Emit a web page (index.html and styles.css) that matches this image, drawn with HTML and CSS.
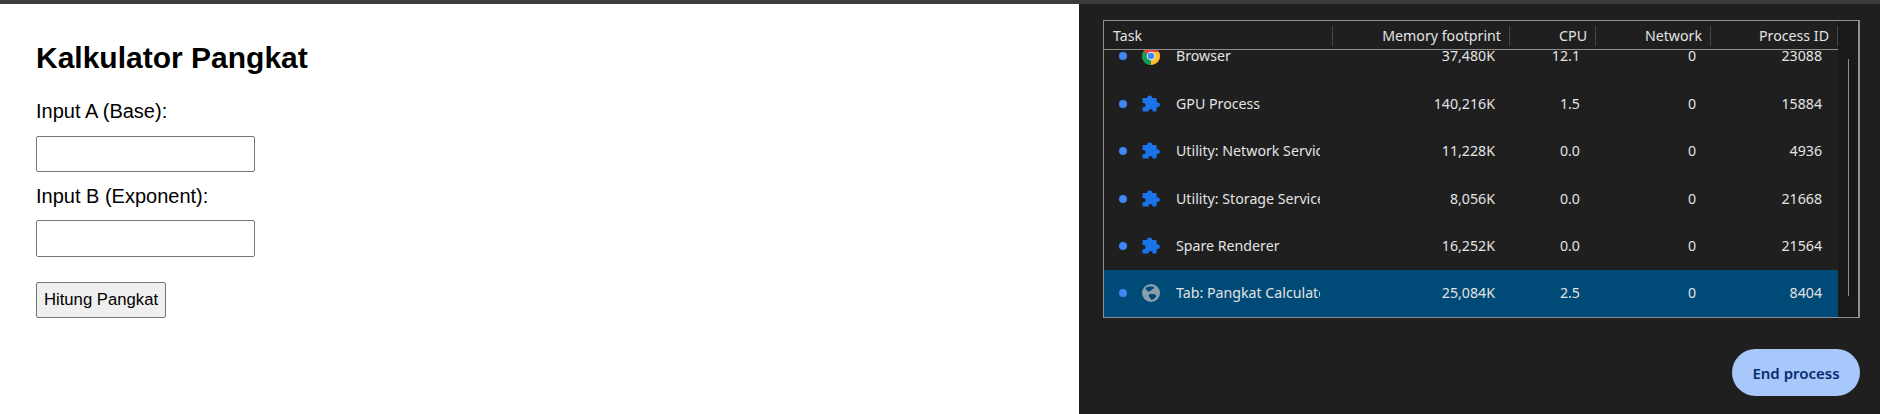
FILE: index.html
```html
<!doctype html>
<html lang="en">
<head>
    <meta charset="UTF-8">
    <title>Kalkulator Pangkat</title>
    <link rel="stylesheet" href="styles.css">
</head>
<body>
    <div class="topbar"></div>
    <div class="screen">
        <div class="page">
            <h1 class="title">Kalkulator Pangkat</h1>
            <label class="field-label">Input A (Base):</label>
            <input class="field" type="text">
            <label class="field-label field-label-b">Input B (Exponent):</label>
            <input class="field field-b" type="text">
            <button class="calc-btn">Hitung Pangkat</button>
        </div>
        <div class="manager">
            <div class="table">
                <div class="table-main">
                    <div class="row head">
                        <div class="head-cell head-task">Task</div>
                        <div class="head-cell">Memory footprint</div>
                        <div class="head-cell">CPU</div>
                        <div class="head-cell">Network</div>
                        <div class="head-cell">Process ID</div>
                    </div>
                    <div class="rows">
                        <div class="row item">
                            <div class="task">
                                <span class="dot"></span>
                                <svg class="icon" viewBox="0 0 18 18">
                                    <circle cx="9" cy="9" r="9" fill="#db4437"/>
                                    <path d="M9 9 L1.2 4.5 A9 9 0 0 0 9 18 Z" fill="#0f9d58"/>
                                    <path d="M9 5 H17 A9 9 0 0 1 9 18 Z" fill="#fbc02d"/>
                                    <circle cx="9" cy="9" r="4.3" fill="#f1f3f4"/>
                                    <circle cx="9" cy="9" r="3.3" fill="#4285f4"/>
                                </svg>
                                <span class="task-name">Browser</span>
                            </div>
                            <div class="num mem">37,480K</div>
                            <div class="num cpu">12.1</div>
                            <div class="num net">0</div>
                            <div class="num pid">23088</div>
                        </div>
                        <div class="row item">
                            <div class="task">
                                <span class="dot"></span>
                                <svg class="icon" viewBox="0 0 18 18"><path class="puzzle" d="M7.2 .6 C9 .1 10.4 1.4 10.1 3.1 L13.6 3.1 C14.2 3.1 14.6 3.5 14.6 4.1 L14.6 7.3 C16.4 6.9 17.9 8.2 17.9 9.8 C17.9 11.4 16.4 12.7 14.6 12.3 L14.6 15.6 C14.6 16.2 14.2 16.6 13.6 16.6 L10.6 16.6 C10.9 14.9 9.9 13.9 8.6 13.9 C7.3 13.9 6.3 14.9 6.6 16.6 L1.5 16.6 C.9 16.6 .5 16.2 .5 15.6 L.5 12.2 C2.3 12.6 3.6 11.5 3.6 10.2 C3.6 8.9 2.3 7.8 .5 8.2 L.5 4.1 C.5 3.5 .9 3.1 1.5 3.1 L5.2 3.1 C4.9 2 5.6 1 7.2 .6 Z"/></svg>
                                <span class="task-name">GPU Process</span>
                            </div>
                            <div class="num mem">140,216K</div>
                            <div class="num cpu">1.5</div>
                            <div class="num net">0</div>
                            <div class="num pid">15884</div>
                        </div>
                        <div class="row item">
                            <div class="task">
                                <span class="dot"></span>
                                <svg class="icon" viewBox="0 0 18 18"><path class="puzzle" d="M7.2 .6 C9 .1 10.4 1.4 10.1 3.1 L13.6 3.1 C14.2 3.1 14.6 3.5 14.6 4.1 L14.6 7.3 C16.4 6.9 17.9 8.2 17.9 9.8 C17.9 11.4 16.4 12.7 14.6 12.3 L14.6 15.6 C14.6 16.2 14.2 16.6 13.6 16.6 L10.6 16.6 C10.9 14.9 9.9 13.9 8.6 13.9 C7.3 13.9 6.3 14.9 6.6 16.6 L1.5 16.6 C.9 16.6 .5 16.2 .5 15.6 L.5 12.2 C2.3 12.6 3.6 11.5 3.6 10.2 C3.6 8.9 2.3 7.8 .5 8.2 L.5 4.1 C.5 3.5 .9 3.1 1.5 3.1 L5.2 3.1 C4.9 2 5.6 1 7.2 .6 Z"/></svg>
                                <span class="task-name">Utility: Network Service</span>
                            </div>
                            <div class="num mem">11,228K</div>
                            <div class="num cpu">0.0</div>
                            <div class="num net">0</div>
                            <div class="num pid">4936</div>
                        </div>
                        <div class="row item">
                            <div class="task">
                                <span class="dot"></span>
                                <svg class="icon" viewBox="0 0 18 18"><path class="puzzle" d="M7.2 .6 C9 .1 10.4 1.4 10.1 3.1 L13.6 3.1 C14.2 3.1 14.6 3.5 14.6 4.1 L14.6 7.3 C16.4 6.9 17.9 8.2 17.9 9.8 C17.9 11.4 16.4 12.7 14.6 12.3 L14.6 15.6 C14.6 16.2 14.2 16.6 13.6 16.6 L10.6 16.6 C10.9 14.9 9.9 13.9 8.6 13.9 C7.3 13.9 6.3 14.9 6.6 16.6 L1.5 16.6 C.9 16.6 .5 16.2 .5 15.6 L.5 12.2 C2.3 12.6 3.6 11.5 3.6 10.2 C3.6 8.9 2.3 7.8 .5 8.2 L.5 4.1 C.5 3.5 .9 3.1 1.5 3.1 L5.2 3.1 C4.9 2 5.6 1 7.2 .6 Z"/></svg>
                                <span class="task-name">Utility: Storage Service</span>
                            </div>
                            <div class="num mem">8,056K</div>
                            <div class="num cpu">0.0</div>
                            <div class="num net">0</div>
                            <div class="num pid">21668</div>
                        </div>
                        <div class="row item">
                            <div class="task">
                                <span class="dot"></span>
                                <svg class="icon" viewBox="0 0 18 18"><path class="puzzle" d="M7.2 .6 C9 .1 10.4 1.4 10.1 3.1 L13.6 3.1 C14.2 3.1 14.6 3.5 14.6 4.1 L14.6 7.3 C16.4 6.9 17.9 8.2 17.9 9.8 C17.9 11.4 16.4 12.7 14.6 12.3 L14.6 15.6 C14.6 16.2 14.2 16.6 13.6 16.6 L10.6 16.6 C10.9 14.9 9.9 13.9 8.6 13.9 C7.3 13.9 6.3 14.9 6.6 16.6 L1.5 16.6 C.9 16.6 .5 16.2 .5 15.6 L.5 12.2 C2.3 12.6 3.6 11.5 3.6 10.2 C3.6 8.9 2.3 7.8 .5 8.2 L.5 4.1 C.5 3.5 .9 3.1 1.5 3.1 L5.2 3.1 C4.9 2 5.6 1 7.2 .6 Z"/></svg>
                                <span class="task-name">Spare Renderer</span>
                            </div>
                            <div class="num mem">16,252K</div>
                            <div class="num cpu">0.0</div>
                            <div class="num net">0</div>
                            <div class="num pid">21564</div>
                        </div>
                        <div class="row item selected">
                            <div class="task">
                                <span class="dot"></span>
                                <svg class="icon" viewBox="0 0 18 18">
                                    <circle cx="9" cy="9" r="9" fill="#8a9eac"/>
                                    <path d="M3.5 4 C6 2.2 10 2 12.5 3.2 C12 5 9.5 5 8.5 7 C6.5 8.5 4.5 7 3.5 4 Z" fill="#004a77"/>
                                    <path d="M7 10.5 C10 9 13 10 14.5 12 C13.5 14 11.5 15.6 9.2 16 C9.2 14 6 13.5 7 10.5 Z" fill="#004a77"/>
                                </svg>
                                <span class="task-name">Tab: Pangkat Calculator</span>
                            </div>
                            <div class="num mem">25,084K</div>
                            <div class="num cpu">2.5</div>
                            <div class="num net">0</div>
                            <div class="num pid">8404</div>
                        </div>
                    </div>
                </div>
                <div class="scroll-gutter"><div class="scroll-thumb"></div></div>
            </div>
            <div class="actions">
                <button class="end-btn">End process</button>
            </div>
        </div>
    </div>
</body>
</html>
```
FILE: styles.css
```css
*{
    margin:0;
    padding:0;
    box-sizing: border-box;
}
html,body{
    width: 1880px;
    height: 414px;
    overflow: hidden;
}
.topbar{
    height: 4px;
    background: #3c3c3c;
}
.screen{
    display: flex;
    height: 410px;
}
.page{
    width: 1079px;
    background: #ffffff;
    color: #000000;
    font-family: "Liberation Sans", Arial, sans-serif;
    padding: 37px 36px 0;
    display: flex;
    flex-direction: column;
    align-items: flex-start;
}
.title{
    font-size: 30px;
    line-height: 33px;
    margin-bottom: 26px;
}
.field-label{
    font-size: 20px;
    line-height: 22px;
    margin-bottom: 14px;
}
.field-label-b{
    margin-bottom: 13px;
}
.field{
    width: 219px;
    height: 36px;
    border: 1px solid #767676;
    border-radius: 2px;
    background: #ffffff;
    margin-bottom: 13px;
}
.field-b{
    height: 37px;
}
.calc-btn{
    width: 130px;
    height: 36px;
    margin-top: 12px;
    font-family: "Liberation Sans", Arial, sans-serif;
    font-size: 16.7px;
    color: #000000;
    background: #efefef;
    border: 1px solid #767676;
    border-radius: 2px;
}
.manager{
    flex: 1;
    background: #1f1f1f;
    color: #e3e3e3;
    font-family: "Noto Sans", sans-serif;
    font-size: 14.2px;
    padding: 16px 20px 0 24px;
}
.table{
    display: flex;
    height: 298px;
    border: 1px solid #8e8e8e;
    border-right-width: 2px;
}
.table-main{
    width: 734px;
    display: flex;
    flex-direction: column;
}
.row{
    display: grid;
    grid-template-columns: 229px 177px 86px 115px 127px;
}
.head{
    height: 29px;
    flex: none;
    border-bottom: 1px solid #8e8e8e;
    padding-top: 5px;
    padding-bottom: 3px;
}
.head-cell{
    text-align: right;
    line-height: 20px;
    padding-right: 8px;
    border-right: 1px solid #444746;
}
.head-task{
    text-align: left;
    padding-left: 9px;
}
/* rows are scrolled to the bottom, first one gets cut by the header */
.rows{
    flex: 1;
    min-height: 0;
    overflow: hidden;
    display: flex;
    flex-direction: column;
    justify-content: flex-end;
}
.item{
    flex: none;
    height: 47.4px;
    align-items: center;
    line-height: 18px;
}
.selected{
    background: #004a77;
}
.task{
    display: flex;
    align-items: center;
    padding-left: 15px;
}
.dot{
    flex: none;
    width: 8px;
    height: 8px;
    border-radius: 50%;
    background: #4285f4;
    margin-right: 15px;
}
.icon{
    flex: none;
    width: 18px;
    height: 18px;
    margin-right: 16px;
}
.puzzle{
    fill: #1a73e8;
}
.task-name{
    width: 144px;
    overflow: hidden;
    white-space: nowrap;
}
.num{
    text-align: right;
}
.mem,
.net{
    padding-right: 15px;
}
.cpu,
.pid{
    padding-right: 16px;
}
.scroll-gutter{
    flex: 1;
    background: #191919;
    padding: 38px 0 21px 10px;
}
.scroll-thumb{
    width: 1px;
    height: 100%;
    background: #8e8e8e;
}
.actions{
    display: flex;
    justify-content: flex-end;
    padding-top: 31px;
}
.end-btn{
    width: 128px;
    height: 47px;
    border: 0;
    border-radius: 24px;
    background: #a8c7fa;
    color: #062e6f;
    font-family: "Noto Sans", sans-serif;
    font-size: 15px;
    font-weight: 600;
}
```
